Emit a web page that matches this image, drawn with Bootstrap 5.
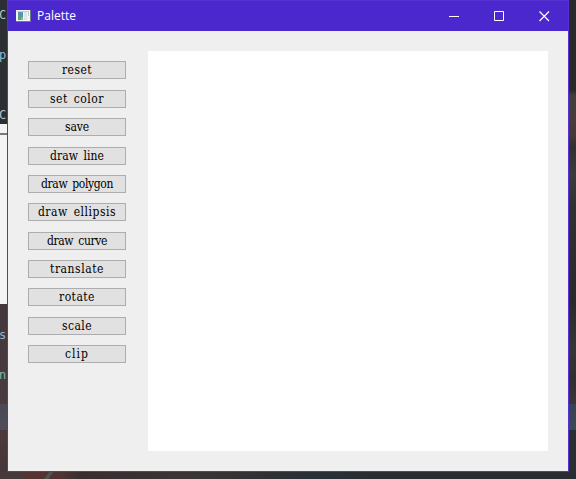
<!DOCTYPE html>
<html lang="en">
<head>
<meta charset="utf-8">
<meta name="viewport" content="width=device-width, initial-scale=1">
<title>Palette</title>
<link href="https://cdn.jsdelivr.net/npm/bootstrap@5.3.0/dist/css/bootstrap.min.css" rel="stylesheet">
<style>
body{width:576px;height:479px;font-family:"Open Sans","Noto Sans",sans-serif;
background:
linear-gradient(#777,#777) 0 133px/7px 2px no-repeat,
linear-gradient(#f3f3f3,#f3f3f3) 0 124px/7px 180px no-repeat,
linear-gradient(#4b4856,#504d5b) 0 404px/7px 26px no-repeat,
linear-gradient(#344355,#3b485b) 569px 404px/7px 26px no-repeat,
linear-gradient(125deg,transparent 38%,#4f5553 42%,#4f5553 56%,transparent 60%) 40px 472px/18px 7px no-repeat,
linear-gradient(90deg,#48393b 0,#48393b 22px,#57322f 28px,#503432 62px,#3a2d30 80px,#3b3435 190px,#303034 270px,#2a3038 310px,#292d31 380px,#292c30) 0 472px/576px 7px no-repeat,
linear-gradient(#2b2e33 0,#2b2e33 124px,#44373c 304px,#493c41 404px,#4b393b 440px,#43353a) 0 0/7px 479px no-repeat,
linear-gradient(#292929 0,#292929 90px,#403f40 95px,#493b3d 118px,#44383b 136px,#303032 146px,#3a3b3e 175px,#303135 205px,#29292b 300px,#353638 350px,#302e31 378px,#393638 403px,#292e32 430px) 569px 0/7px 479px no-repeat,#2b2e33}
.window{width:562px;height:472px;margin-left:7px;border:1px solid #5630d0;background:#efefef}
.titlebar{height:30px;background:#4b28cd;color:#fff;font-size:12px;padding:0 1px 0 8px}
.titlebar span{margin-left:6px;line-height:28px}
.caption-btn{width:45px;height:28px;border:0;background:none;color:#fff;padding:0}
.caption-btn svg{display:block;margin:auto}
.tools{width:98px;margin:30.4px 22px 0 20px;gap:10.38px}
.tool{height:18px;flex:none;padding:0;border:1px solid #adadad;border-radius:0;background:#e1e1e1;color:#000;font:12px/17px "DejaVu Serif Condensed","DejaVu Serif",serif;word-spacing:2px;white-space:nowrap}
.tool:hover{background:#e5f1fb;border-color:#0078d7;color:#000}
.paper{width:400px;height:400px;margin-top:20px;background:#fff}
.peek{left:-1px;font:12px/16px "DejaVu Sans Mono",monospace;color:#b5c4ca}
</style>
<script src="https://cdn.jsdelivr.net/npm/bootstrap@5.3.0/dist/js/bootstrap.bundle.min.js"></script>
</head>
<body class="m-0 overflow-hidden position-relative">
<!-- editor text showing beside the window -->
<span class="peek position-absolute" style="top:7px">C</span>
<span class="peek position-absolute" style="top:47px;color:#8dbdd0">p</span>
<span class="peek position-absolute" style="top:107px">C</span>
<span class="peek position-absolute" style="top:327px;color:#8fb4d4">s</span>
<span class="peek position-absolute" style="top:367px;color:#86b5a8">n</span>
<main class="window position-relative">
<header class="titlebar d-flex align-items-center">
<svg width="15" height="13" viewBox="0 0 15 13" shape-rendering="crispEdges" aria-hidden="true"><path fill="#77777f" d="M0 0h15v12H0z"/><path fill="#f4f4f4" d="M0 0h14v11H0z"/><path fill="#cfcfcf" d="M1 1h12v1H1z"/><path fill="#5a93ae" d="M2 2h5v8H2z"/><path fill="#58a179" d="M2 5h3v5H2z"/><path fill="#78bba0" d="M5 7h2v3H5z"/><path fill="#d8e7e8" d="M8 2h3v8H8z"/><path fill="#aed3dc" d="M12 2h1v4h-1z"/></svg>
<span class="me-auto">Palette</span>
<button class="caption-btn" aria-label="Minimize"><svg width="11" height="11" viewBox="0 0 11 11"><path fill="#fff" d="M0 5h10v1H0z"/></svg></button>
<button class="caption-btn" aria-label="Maximize"><svg width="11" height="11" viewBox="0 0 11 11"><path fill="none" stroke="#fff" d="M.5 .5h9v9h-9z"/></svg></button>
<button class="caption-btn" aria-label="Close"><svg width="11" height="11" viewBox="0 0 11 11"><path fill="none" stroke="#fff" stroke-width="1.2" d="M.5 .5l9.5 9.5M10 .5L.5 10"/></svg></button>
</header>
<div class="d-flex align-items-start">
<div class="tools d-flex flex-column">
<button class="btn tool" style="letter-spacing:.43px">reset</button>
<button class="btn tool" style="letter-spacing:.5px">set color</button>
<button class="btn tool" style="letter-spacing:-.1px">save</button>
<button class="btn tool" style="letter-spacing:.08px">draw line</button>
<button class="btn tool" style="letter-spacing:-.38px">draw polygon</button>
<button class="btn tool" style="letter-spacing:.52px">draw ellipsis</button>
<button class="btn tool" style="letter-spacing:-.38px">draw curve</button>
<button class="btn tool" style="letter-spacing:.55px">translate</button>
<button class="btn tool" style="letter-spacing:.47px">rotate</button>
<button class="btn tool" style="letter-spacing:.42px">scale</button>
<button class="btn tool" style="letter-spacing:1px">clip</button>
</div>
<div class="paper"></div>
</div>
</main>
</body>
</html>
